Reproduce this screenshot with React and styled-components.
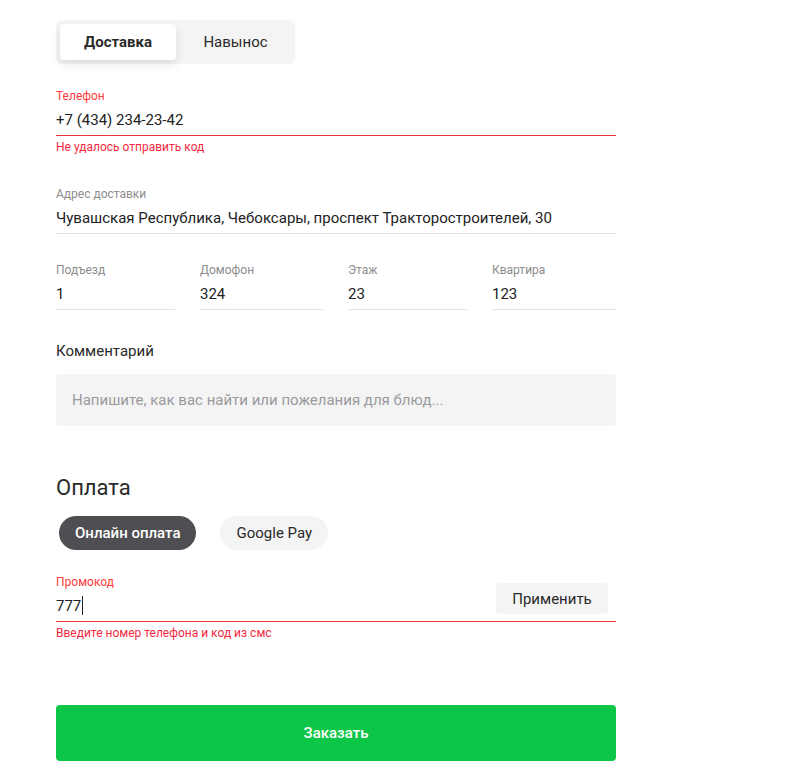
import React from "react";
import styled, { createGlobalStyle } from "styled-components";

const Global = createGlobalStyle`
  html, body { margin: 0; padding: 0; background: #fff; }
  body { font-family: Roboto, "Noto Sans", Arial, sans-serif; color: #222; }
  * { box-sizing: border-box; }
`;

const Page = styled.div`
  width: 560px;
  margin-left: 56px;
  padding-top: 20px;
  padding-bottom: 23px;
  display: flex;
  flex-direction: column;
`;

const Tabs = styled.div`
  display: flex;
  align-self: flex-start;
  width: 239px;
  height: 44px;
  padding: 4px;
  background: #f4f4f4;
  border-radius: 6px;
`;

const Tab = styled.div`
  width: ${(p) => (p.$active ? "116px" : "115px")};
  height: 36px;
  display: flex;
  align-items: center;
  justify-content: center;
  padding-left: ${(p) => (p.$active ? 0 : 4)}px;
  border-radius: 4px;
  font-size: 15px;
  font-weight: ${(p) => (p.$active ? 700 : 400)};
  color: #2a2a2a;
  background: ${(p) => (p.$active ? "#fff" : "transparent")};
  box-shadow: ${(p) => (p.$active ? "0 4px 10px rgba(0,0,0,0.10)" : "none")};
`;

const Field = styled.div`
  display: flex;
  flex-direction: column;
  margin-top: ${(p) => p.$mt || 0}px;
`;

const FieldRow = styled.div`
  display: flex;
  align-items: flex-end;
  border-bottom: 1px solid ${(p) => (p.$error ? "#f0353d" : "#e4e4e4")};
`;

const FieldMain = styled.div`
  flex: 1;
  display: flex;
  flex-direction: column;
`;

const Label = styled.div`
  font-size: 12px;
  line-height: 14px;
  color: ${(p) => (p.$error ? "#ff3b3b" : "#8d8d8d")};
  margin-bottom: 1px;
`;

const Value = styled.div`
  height: 31px;
  display: flex;
  align-items: center;
  font-size: 15px;
  color: #222;
  white-space: nowrap;
`;

const Caret = styled.span`
  display: inline-block;
  width: 1px;
  height: 19px;
  background: #222;
  margin-left: 1px;
`;

const ErrorText = styled.div`
  font-size: 12px;
  line-height: 14px;
  color: #f5293f;
  margin-top: 4px;
`;

const Grid = styled.div`
  display: grid;
  grid-template-columns: 119px 123px 119px 124px;
  justify-content: space-between;
  margin-top: 29px;
`;

const SectionLabel = styled.div`
  font-size: 15px;
  line-height: 18px;
  color: #2a2a2a;
  margin-top: 32px;
`;

const CommentBox = styled.div`
  margin-top: 14px;
  height: 52px;
  background: #f4f4f4;
  border-radius: 4px;
  display: flex;
  align-items: center;
  padding-left: 16px;
  font-size: 15px;
  color: #9a9a9f;
`;

const Heading = styled.div`
  margin-top: 49px;
  font-size: 22px;
  line-height: 26px;
  color: #2a2a2a;
`;

const Pills = styled.div`
  display: flex;
  gap: 24px;
  margin-top: 15px;
  padding-left: 3px;
`;

const Pill = styled.div`
  height: 34px;
  padding: 0 16px;
  border-radius: 17px;
  display: flex;
  align-items: center;
  font-size: 15px;
  font-weight: ${(p) => (p.$active ? 500 : 400)};
  color: ${(p) => (p.$active ? "#fff" : "#2a2a2a")};
  background: ${(p) => (p.$active ? "#4f4e53" : "#f4f4f4")};
`;

const ApplyButton = styled.div`
  width: 112px;
  height: 31px;
  margin: 0 8px 7px 0;
  border-radius: 4px;
  background: #f4f4f4;
  display: flex;
  align-items: center;
  justify-content: center;
  font-size: 15px;
  color: #2a2a2a;
`;

const OrderButton = styled.div`
  margin-top: 65px;
  height: 56px;
  border-radius: 4px;
  background: #0cc648;
  color: #fff;
  display: flex;
  align-items: center;
  justify-content: center;
  font-size: 15px;
  font-weight: 500;
`;

const fields = [
  { label: "Подъезд", value: "1" },
  { label: "Домофон", value: "324" },
  { label: "Этаж", value: "23" },
  { label: "Квартира", value: "123" },
];

export default function App() {
  return (
    <>
      <Global />
      <Page>
        <Tabs>
          <Tab $active>Доставка</Tab>
          <Tab>Навынос</Tab>
        </Tabs>

        <Field $mt={25}>
          <FieldRow $error>
            <FieldMain>
              <Label $error>Телефон</Label>
              <Value>+7 (434) 234-23-42</Value>
            </FieldMain>
          </FieldRow>
          <ErrorText>Не удалось отправить код</ErrorText>
        </Field>

        <Field $mt={33}>
          <FieldRow>
            <FieldMain>
              <Label>Адрес доставки</Label>
              <Value>Чувашская Республика, Чебоксары, проспект Тракторостроителей, 30</Value>
            </FieldMain>
          </FieldRow>
        </Field>

        <Grid>
          {fields.map((f) => (
            <Field key={f.label}>
              <FieldRow>
                <FieldMain>
                  <Label>{f.label}</Label>
                  <Value>{f.value}</Value>
                </FieldMain>
              </FieldRow>
            </Field>
          ))}
        </Grid>

        <SectionLabel>Комментарий</SectionLabel>
        <CommentBox>Напишите, как вас найти или пожелания для блюд...</CommentBox>

        <Heading>Оплата</Heading>
        <Pills>
          <Pill $active>Онлайн оплата</Pill>
          <Pill>Google Pay</Pill>
        </Pills>

        <Field $mt={25}>
          <FieldRow $error>
            <FieldMain>
              <Label $error>Промокод</Label>
              <Value>
                777<Caret />
              </Value>
            </FieldMain>
            <ApplyButton>Применить</ApplyButton>
          </FieldRow>
          <ErrorText>Введите номер телефона и код из смс</ErrorText>
        </Field>

        <OrderButton>Заказать</OrderButton>
      </Page>
    </>
  );
}
